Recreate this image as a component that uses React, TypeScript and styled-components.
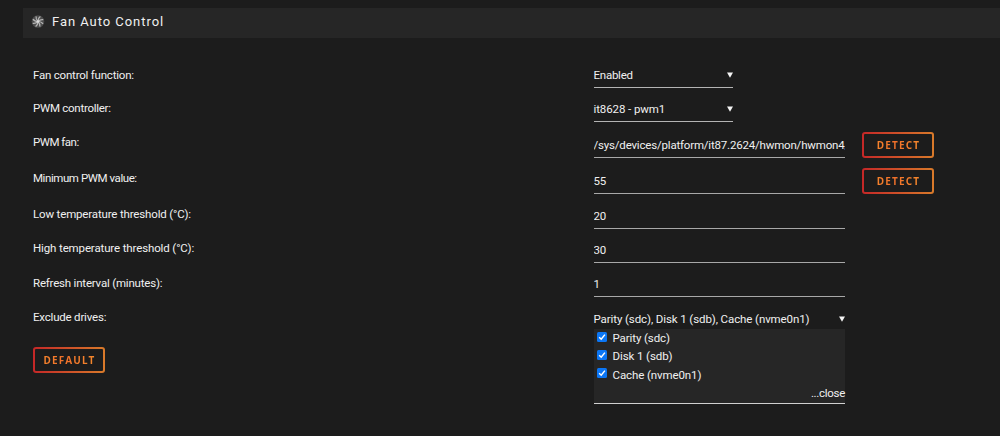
import { useState } from "react";
import styled, { createGlobalStyle } from "styled-components";

const GlobalStyle = createGlobalStyle`
  * {
    box-sizing: border-box;
  }
  body {
    margin: 0;
    background: #1c1c1c;
    color: #f0f0f0;
    font-family: Roboto, "Liberation Sans", sans-serif;
    font-size: 11.5px;
  }
`;

const Page = styled.main`
  height: 436px;
  padding-top: 8px;
  overflow: hidden;
`;

const TitleBar = styled.header`
  display: flex;
  align-items: center;
  gap: 7px;
  height: 30px;
  margin-left: 23px;
  padding: 0 0 3px 8px;
  background: #262626;
`;

const Title = styled.h1`
  margin: 0;
  font-size: 13px;
  font-weight: 400;
  letter-spacing: 0.95px;
  line-height: 18px;
`;

const Form = styled.form`
  padding: 24px 0 0 33px;
`;

const Row = styled.div<{ $height: number }>`
  display: flex;
  align-items: flex-end;
  height: ${(props) => props.$height}px;
`;

const Label = styled.label<{ $lift: number; $spacing: number }>`
  width: 560.5px;
  flex: none;
  line-height: 18px;
  margin-bottom: ${(props) => props.$lift}px;
  letter-spacing: ${(props) => props.$spacing}px;
  white-space: nowrap;
`;

const Select = styled.div`
  display: flex;
  justify-content: space-between;
  align-items: center;
  width: 139.5px;
  height: 25px;
  border-bottom: 1px solid #b4b4b4;
`;

const Input = styled.input`
  width: 251.5px;
  height: 25px;
  padding: 0;
  border: 0;
  border-bottom: 1px solid #a8a8a8;
  border-radius: 0;
  outline: 0;
  background: transparent;
  color: inherit;
  font: inherit;
  letter-spacing: -0.19px;
`;

const Text = styled.span<{ $spacing?: number }>`
  line-height: 18px;
  letter-spacing: ${(props) => props.$spacing ?? -0.1}px;
  white-space: nowrap;
`;

const Arrow = styled.svg`
  width: 6px;
  height: 6px;
  fill: #f4f4f4;
`;

const Button = styled.button`
  width: 72px;
  height: 26px;
  padding: 0 0 0 1px;
  border: 2px solid transparent;
  border-radius: 3px;
  background:
    linear-gradient(#1c1c1c, #1c1c1c) padding-box,
    linear-gradient(90deg, #c42727, #d87a2a) border-box;
  font: 700 10px/16px "Noto Sans", sans-serif;
  letter-spacing: 1.15px;
`;

const ButtonText = styled.span`
  background: linear-gradient(90deg, #f5822c, #f0702a 40%, #f5882c);
  background-clip: text;
  color: transparent;
`;

const DetectButton = styled(Button)`
  margin-left: 17px;
`;

const Drives = styled.div`
  width: 251.5px;
  border-bottom: 1px solid #d0d0d0;
`;

const DrivesHead = styled.div`
  display: flex;
  justify-content: space-between;
  align-items: center;
  height: 20px;
`;

const DrivesList = styled.div`
  height: 74px;
  background: #262626;
`;

const DriveOption = styled.label`
  display: flex;
  align-items: center;
  gap: 6px;
  height: 18.3px;
  padding-left: 3px;
`;

const Check = styled.svg`
  width: 10px;
  height: 10px;
  margin-bottom: 3px;
`;

const Close = styled.div`
  height: 19px;
  line-height: 19px;
  letter-spacing: -0.3px;
  text-align: right;
`;

const LastRow = styled.div`
  display: flex;
  align-items: flex-start;
`;

const LeftColumn = styled.div`
  width: 560.5px;
  padding-top: 11px;
`;

const DriveLabel = styled.div`
  line-height: 18px;
  margin-bottom: 21px;
  letter-spacing: -0.2px;
`;

const ValueColumn = styled.div`
  padding-top: 12px;
`;

function Down() {
  return (
    <Arrow viewBox="0 0 6 6">
      <path d="M0 0.5H6L3 5.8Z" />
    </Arrow>
  );
}

function FanIcon() {
  return (
    <svg width="14" height="14" viewBox="0 0 14 14">
      <circle cx="7" cy="6.5" r="6.3" fill="#4c4c4c" />
      {[0, 45, 90, 135, 180, 225, 270, 315].map((angle) => (
        <path
          key={angle}
          d="M7 6.5Q7 3 9.4 1.5"
          transform={`rotate(${angle} 7 6.5)`}
          fill="none"
          stroke="#b4b4b4"
          strokeWidth="1.2"
        />
      ))}
      <circle cx="7" cy="6.5" r="1.3" fill="#ddd" />
    </svg>
  );
}

const fields = [
  { label: "PWM fan:", value: "/sys/devices/platform/it87.2624/hwmon/hwmon4/pwm1", height: 36, lift: 7, spacing: -0.5, detect: true },
  { label: "Minimum PWM value:", value: "55", height: 36, lift: 7, spacing: -0.43, detect: true },
  { label: "Low temperature threshold (°C):", value: "20", height: 35, lift: 6, spacing: -0.16 },
  { label: "High temperature threshold (°C):", value: "30", height: 34, lift: 6, spacing: -0.13 },
  { label: "Refresh interval (minutes):", value: "1", height: 34, lift: 5, spacing: -0.2 },
];

const drives = ["Parity (sdc)", "Disk 1 (sdb)", "Cache (nvme0n1)"];

export default function App() {
  const [excluded, setExcluded] = useState(drives);

  const toggleDrive = (drive: string) => {
    setExcluded(
      drives.filter((item) => (item === drive ? !excluded.includes(item) : excluded.includes(item)))
    );
  };

  return (
    <Page>
      <GlobalStyle />
      <TitleBar>
        <FanIcon />
        <Title>Fan Auto Control</Title>
      </TitleBar>
      <Form>
        <Row $height={26}>
          <Label $lift={4} $spacing={-0.21}>Fan control function:</Label>
          <Select>
            <Text $spacing={-0.25}>Enabled</Text>
            <Down />
          </Select>
        </Row>
        <Row $height={34}>
          <Label $lift={5} $spacing={-0.27}>PWM controller:</Label>
          <Select>
            <Text>it8628 - pwm1</Text>
            <Down />
          </Select>
        </Row>
        {fields.map((field) => (
          <Row key={field.label} $height={field.height}>
            <Label $lift={field.lift} $spacing={field.spacing}>{field.label}</Label>
            <Input defaultValue={field.value} />
            {field.detect && (
              <DetectButton type="button">
                <ButtonText>DETECT</ButtonText>
              </DetectButton>
            )}
          </Row>
        ))}
        <LastRow>
          <LeftColumn>
            <DriveLabel>Exclude drives:</DriveLabel>
            <Button type="button">
              <ButtonText>DEFAULT</ButtonText>
            </Button>
          </LeftColumn>
          <ValueColumn>
            <Drives>
              <DrivesHead>
                <Text>{excluded.join(", ")}</Text>
                <Down />
              </DrivesHead>
              <DrivesList>
                {drives.map((drive) => (
                  <DriveOption key={drive} onClick={() => toggleDrive(drive)}>
                    <Check viewBox="0 0 10 10">
                      <rect width="10" height="10" rx="1.5" fill={excluded.includes(drive) ? "#0b76f5" : "#fff"} />
                      <path d="M2.2 5.3L4.2 7.2L7.9 2.6" fill="none" stroke="#fff" strokeWidth="1.5" />
                    </Check>
                    <Text>{drive}</Text>
                  </DriveOption>
                ))}
                <Close>...close</Close>
              </DrivesList>
            </Drives>
          </ValueColumn>
        </LastRow>
      </Form>
    </Page>
  );
}
